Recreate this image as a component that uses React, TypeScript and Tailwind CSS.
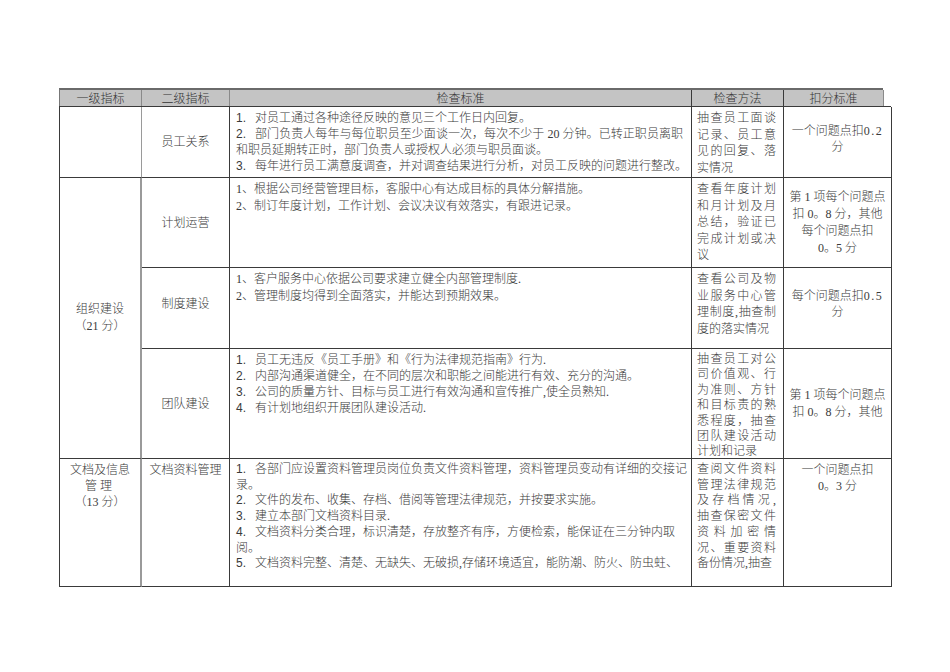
import React from "react";

const SONG = "font-['Liberation_Serif','Noto_Sans_CJK_SC',serif]";
const ARIAL = "font-['Liberation_Sans','Noto_Sans_CJK_SC',sans-serif]";

function J({ children, w }: { children: React.ReactNode; w?: string }) {
  return (
    <div className={`text-justify [text-align-last:justify] whitespace-nowrap ${w ?? ""}`}>
      {children}
    </div>
  );
}

function N({ n, children, full, w }: { n: string; children: React.ReactNode; full?: boolean; w?: string }) {
  const inner = (
    <>
      <span className={`${ARIAL} inline-block w-[19px]`}>{n}</span>
      {children}
    </>
  );
  if (full) return <J w={w}>{inner}</J>;
  return <div className="whitespace-nowrap">{inner}</div>;
}

function Method({ lines, lh }: { lines: string[]; lh?: string }) {
  return (
    <div className={`pl-[5px] pr-[7px] pt-[3px] ${lh ?? "leading-[16.5px]"}`}>
      {lines.map((l, i) =>
        i < lines.length - 1 ? (
          <J key={i}>{l}</J>
        ) : (
          <div key={i} className="whitespace-nowrap">{l}</div>
        )
      )}
    </div>
  );
}

export default function App() {
  const cell = "border-r border-b border-[#3a3a3a]";
  return (
    <div className={`min-h-[672px] w-[950px] bg-white pt-[88px] pl-[59px] text-[12px] font-light text-[#3a3a3a] ${SONG}`}>
      {/* header */}
      <div className="grid w-[824px] grid-cols-[82px_88px_462px_92px_100px] h-[18px] bg-[#c4c4c4] border-t-2 border-t-[#6a6a6a] border-l border-l-[#777] leading-[16px] font-['Noto_Sans_CJK_SC',sans-serif] text-[#333]">
        <div className="border-r border-[#8a8a8a] text-center">一级指标</div>
        <div className="border-r border-[#8a8a8a] text-center">二级指标</div>
        <div className="border-r border-[#3a3a3a] text-center">检查标准</div>
        <div className="border-r border-[#3a3a3a] text-center">检查方法</div>
        <div className="border-r border-[#8a8a8a] text-center">扣分标准</div>
      </div>
      {/* body */}
      <div className="grid w-[832px] grid-cols-[82px_88px_462px_92px_108px] grid-rows-[71px_90px_81px_110px_128px] border-t border-t-[#3a3a3a] border-l border-l-[#3a3a3a]">
        {/* row 1 */}
        <div className={`${cell} border-r-[#9a9a9a]`}></div>
        <div className={`${cell} flex items-center justify-center`}>员工关系</div>
        <div className={`${cell} pl-[6px] pt-[3px] leading-[16px]`}>
          <N n="1.">对员工通过各种途径反映的意见三个工作日内回复。</N>
          <N n="2." full w="w-[447px]">部门负责人每年与每位职员至少面谈一次，每次不少于 20 分钟。已转正职员离职</N>
          <div className="whitespace-nowrap">和职员延期转正时，部门负责人或授权人必须与职员面谈。</div>
          <N n="3.">每年进行员工满意度调查，并对调查结果进行分析，对员工反映的问题进行整改。</N>
        </div>
        <div className={cell}>
          <Method lines={["抽查员工面谈", "记录、员工意", "见的回复、落", "实情况"]} />
        </div>
        <div className={`${cell} flex flex-col items-center justify-center leading-[16px] pb-[6px]`}>
          <div>
            一个问题点扣<span className="tracking-[1.5px]">0.2</span>
          </div>
          <div>分</div>
        </div>

        {/* 组织建设 spanning rows 2-4 */}
        <div className={`${cell} row-span-3 border-r-2 border-r-[#9a9a9a] flex flex-col items-center justify-center leading-[17px]`}>
          <div>组织建设</div>
          <div>（21 分）</div>
        </div>

        {/* row 2 */}
        <div className={`${cell} flex items-center justify-center`}>计划运营</div>
        <div className={`${cell} pl-[6px] pt-[3px] leading-[17px]`}>
          <div className="whitespace-nowrap">1、根据公司经营管理目标，客服中心有达成目标的具体分解措施。</div>
          <div className="whitespace-nowrap">2、制订年度计划，工作计划、会议决议有效落实，有跟进记录。</div>
        </div>
        <div className={cell}>
          <Method lines={["查看年度计划", "和月计划及月", "总结，验证已", "完成计划或决", "议"]} />
        </div>
        <div className={`${cell} flex flex-col items-center justify-center leading-[17px]`}>
          <div>第 1 项每个问题点</div>
          <div>扣 0。8 分，其他</div>
          <div>每个问题点扣</div>
          <div>0。5 分</div>
        </div>

        {/* row 3 */}
        <div className={`${cell} flex items-center justify-center pb-[8px]`}>制度建设</div>
        <div className={`${cell} pl-[6px] pt-[3px] leading-[17px]`}>
          <div className="whitespace-nowrap">1、客户服务中心依据公司要求建立健全内部管理制度.</div>
          <div className="whitespace-nowrap">2、管理制度均得到全面落实，并能达到预期效果。</div>
        </div>
        <div className={cell}>
          <Method lines={["查看公司及物", "业服务中心管", "理制度,抽查制", "度的落实情况"]} />
        </div>
        <div className={`${cell} flex flex-col items-center justify-center leading-[16px] pb-[8px]`}>
          <div>
            每个问题点扣<span className="tracking-[1.5px]">0.5</span>
          </div>
          <div>分</div>
        </div>

        {/* row 4 */}
        <div className={`${cell} flex items-center justify-center`}>团队建设</div>
        <div className={`${cell} pl-[6px] pt-[3px] leading-[16px]`}>
          <N n="1.">员工无违反《员工手册》和《行为法律规范指南》行为.</N>
          <N n="2.">内部沟通渠道健全，在不同的层次和职能之间能进行有效、充分的沟通。</N>
          <N n="3.">公司的质量方针、目标与员工进行有效沟通和宣传推广,使全员熟知.</N>
          <N n="4.">有计划地组织开展团队建设活动.</N>
        </div>
        <div className={`${cell} overflow-hidden`}>
          <Method
            lh="leading-[15.4px]"
            lines={[
              "抽查员工对公",
              "司价值观、行",
              "为准则、方针",
              "和目标责的熟",
              "悉程度，抽查",
              "团队建设活动",
              "计划和记录",
            ]}
          />
        </div>
        <div className={`${cell} flex flex-col items-center justify-center leading-[17px]`}>
          <div>第 1 项每个问题点</div>
          <div>扣 0。8 分，其他</div>
        </div>

        {/* row 5 */}
        <div className={`${cell} border-r-2 border-r-[#9a9a9a] flex flex-col items-center pt-[3px] leading-[16px]`}>
          <div>文档及信息</div>
          <div className="tracking-[3px]">管理</div>
          <div>（13 分）</div>
        </div>
        <div className={`${cell} text-center pt-[3px] leading-[16px]`}>文档资料管理</div>
        <div className={`${cell} pl-[6px] pt-[3px] leading-[15.7px]`}>
          <N n="1." full w="w-[433px]">各部门应设置资料管理员岗位负责文件资料管理，资料管理员变动有详细的交接记</N>
          <div>录。</div>
          <N n="2.">文件的发布、收集、存档、借阅等管理法律规范，并按要求实施。</N>
          <N n="3.">建立本部门文档资料目录.</N>
          <N n="4." full w="w-[433px]">文档资料分类合理，标识清楚，存放整齐有序，方便检索，能保证在三分钟内取</N>
          <div>阅。</div>
          <N n="5.">文档资料完整、清楚、无缺失、无破损,存储环境适宜，能防潮、防火、防虫蛀、</N>
        </div>
        <div className={`${cell} overflow-hidden`}>
          <Method
            lh="leading-[15.7px]"
            lines={[
              "查阅文件资料",
              "管理法律规范",
              "及存档情况,",
              "抽查保密文件",
              "资料加密情",
              "况、重要资料",
              "备份情况,抽查",
            ]}
          />
        </div>
        <div className={`${cell} flex flex-col items-center pt-[3px] leading-[16px]`}>
          <div>一个问题点扣</div>
          <div>0。3 分</div>
        </div>
      </div>
    </div>
  );
}
